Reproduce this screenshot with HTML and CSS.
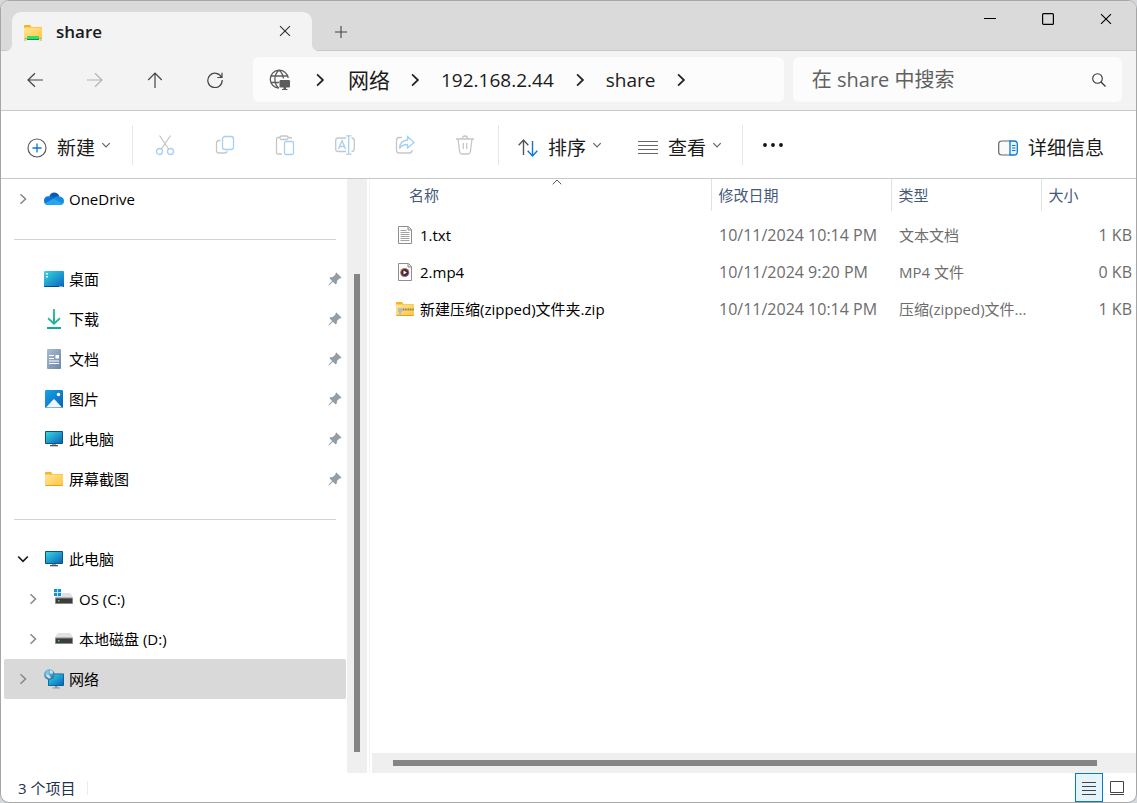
FILE: index.html
```html
<!DOCTYPE html>
<html lang="zh-CN">
<head>
<meta charset="utf-8">
<title>share</title>
<link rel="stylesheet" href="styles.css">
</head>
<body>
<svg class="sprite" aria-hidden="true">
  <defs>
    <linearGradient id="g-screen" x1="0" y1="0" x2="1" y2="1"><stop offset="0" stop-color="#35d8e0"/><stop offset="1" stop-color="#0a63bd"/></linearGradient>
    <linearGradient id="g-folder" x1="0" y1="0" x2="1" y2="1"><stop offset="0" stop-color="#ffe6a0"/><stop offset="1" stop-color="#ffc637"/></linearGradient>
    <linearGradient id="g-down" x1="0" y1="0" x2="0" y2="1"><stop offset="0" stop-color="#3cc78c"/><stop offset="1" stop-color="#0fa89c"/></linearGradient>
    <linearGradient id="g-doc" x1="0" y1="0" x2="1" y2="1"><stop offset="0" stop-color="#a9bdd2"/><stop offset="1" stop-color="#6c87a8"/></linearGradient>
    <linearGradient id="g-pic" x1="0" y1="0" x2="1" y2="1"><stop offset="0" stop-color="#18a4e8"/><stop offset="1" stop-color="#0860b8"/></linearGradient>
    <linearGradient id="g-play" x1="0" y1="0" x2="1" y2="1"><stop offset="0" stop-color="#f08030"/><stop offset="1" stop-color="#8040b0"/></linearGradient>
    <radialGradient id="g-globe" cx=".35" cy=".3" r=".8"><stop offset="0" stop-color="#8ccdea"/><stop offset="1" stop-color="#1b6f9c"/></radialGradient>
  </defs>
  <symbol id="i-right" viewBox="0 0 12 12"><path d="M3.500 1.200 8.500 6 3.500 10.800" fill="none" stroke="currentColor" stroke-width="1.500"/></symbol>
  <symbol id="i-down" viewBox="0 0 12 12"><path d="M1.200 3.500 6 8.300 10.800 3.500" fill="none" stroke="currentColor" stroke-width="1.700"/></symbol>
  <symbol id="i-drop" viewBox="0 0 8 8"><path d="M1 2.500 4 5.500 7 2.500" fill="none" stroke="#666" stroke-width="1"/></symbol>
  <symbol id="i-close" viewBox="0 0 14 14"><path d="M1.200 1.200 12.800 12.800M12.800 1.200 1.200 12.800" fill="none" stroke="currentColor" stroke-width="1.300"/></symbol>
  <symbol id="i-pin" viewBox="0 0 14 14"><path d="M8.400.6 13.400 5.500 12.500 6.400 11.400 6.500 9 9.100 8.700 11.600 7.700 12.400 4.900 9.700 1.200 13.300.5 12.800 4.100 9 1.500 6.300 2.200 5.300 4.800 5 7.400 2.600 7.500 1.400Z" fill="#929da5"/></symbol>
  <symbol id="i-pc" viewBox="0 0 20 20"><path d="M8 14h4v3H8z" fill="#9aa5ad"/><path d="M6 16h8v1.300H6z" fill="#4a5056"/><rect x="1" y="2" width="18" height="13" rx=".8" fill="#0c5480"/><rect x="2" y="3" width="16" height="11" fill="url(#g-screen)"/></symbol>
  <symbol id="i-folder" viewBox="0 0 20 20"><path d="M1 4q0-1 1-1h5l1.500 2H18q1 0 1 1v3H1z" fill="#f9b41b"/><rect x="1" y="5.500" width="18" height="11.500" rx=".8" fill="url(#g-folder)"/><path d="M1.500 16.500h17" stroke="#e2a31d"/></symbol>
  <symbol id="i-drive" viewBox="0 0 20 20"><path d="M4 4h12q1.600 1 3 5H1q1.400-4 3-5z" fill="#dfe1e4"/><rect x="1" y="8.500" width="18" height="6.500" rx=".7" fill="#8a8a8a"/><rect x="2" y="9.500" width="16" height="4.500" fill="#3c3c3c"/><rect x="4" y="11" width="1.500" height="1.500" fill="#34e24a"/></symbol>
  <symbol id="i-page" viewBox="0 0 20 20"><path d="M3.500 1.500h10l3 3v14h-13z" fill="#fdfdfd" stroke="#8e8e8e"/><path d="M13 1.500v3.500h3.500" fill="#ddd" stroke="#8e8e8e"/></symbol>
</svg>

<div class="window">
  <header class="titlebar">
    <div class="tab">
      <svg class="ic20" viewBox="0 0 20 20"><use href="#i-folder"/><rect x="4" y="14" width="12" height="4" rx="1" fill="#2be06a"/><path d="M4 17.500h12" stroke="#138c3f" stroke-width="1.200"/><path d="M1 18h2.500M16.500 18h2.500" stroke="#aaa"/></svg>
      <span class="tab-title">share</span>
      <button class="plain" aria-label="关闭标签页"><svg class="ic12"><use href="#i-close"/></svg></button>
    </div>
    <button class="plain new-tab" aria-label="新标签页"><svg class="ic12" viewBox="0 0 12 12"><path d="M6 0v12M0 6h12" stroke="#444" fill="none" stroke-width="1.100"/></svg></button>
    <div class="controls">
      <button class="plain" aria-label="最小化"><svg class="ic12" viewBox="0 0 12 12"><path d="M0 5.500h12" stroke="#000"/></svg></button>
      <button class="plain" aria-label="最大化"><svg class="ic12" viewBox="0 0 12 12"><rect x=".6" y=".6" width="10.800" height="10.800" rx="1" fill="none" stroke="#000" stroke-width="1.200"/></svg></button>
      <button class="plain" aria-label="关闭"><svg class="ic12"><use href="#i-close"/></svg></button>
    </div>
  </header>

  <div class="navbar">
    <div class="nav-buttons">
      <button class="plain" aria-label="后退"><svg class="ic16" viewBox="0 0 16 16"><path d="M16 8H1M8 1.200 1 8 8 14.800"/></svg></button>
      <button class="plain off" aria-label="前进" disabled><svg class="ic16" viewBox="0 0 16 16"><path d="M0 8h15M8 1.200 15 8 8 14.800"/></svg></button>
      <button class="plain" aria-label="向上"><svg class="ic16" viewBox="0 0 16 16"><path d="M8 16V1M1.200 8 8 1 14.800 8"/></svg></button>
      <button class="plain" aria-label="刷新"><svg class="ic16" viewBox="0 0 16 16"><path d="M14.600 5.500A7.200 7.200 0 1 0 15.200 8M15 .8v4.700h-4.700"/></svg></button>
    </div>
    <nav class="address" aria-label="地址">
      <svg class="globe" viewBox="0 0 22 22"><g fill="none" stroke="#5c5c5c" stroke-width="1.300"><path d="M10 19.200A9 9 0 1 1 19.200 9M2 7h16.500M2 13.500h8M10 19.200C4.500 15 4.500 5.500 10 1.200 13 3.500 14.200 6 14.400 9.500"/></g><rect x="10.500" y="11" width="10.500" height="7.500" rx="1.200" fill="#5c5c5c"/><path d="M14.500 18h2.500v2h1.500v1H13v-1h1.500z" fill="#5c5c5c"/></svg>
      <svg class="sep"><use href="#i-right"/></svg>
      <a class="crumb cjk" href="#">网络</a>
      <svg class="sep"><use href="#i-right"/></svg>
      <a class="crumb" href="#">192.168.2.44</a>
      <svg class="sep"><use href="#i-right"/></svg>
      <a class="crumb" href="#">share</a>
      <svg class="sep"><use href="#i-right"/></svg>
    </nav>
    <form class="search">
      <input type="text" aria-label="搜索" placeholder="在 share 中搜索">
      <button class="plain" type="button" aria-label="搜索"><svg class="ic14" viewBox="0 0 14 14"><circle cx="5.500" cy="5.500" r="4.800" fill="none" stroke="#333" stroke-width="1.100"/><path d="M9 9l4.500 4.500" stroke="#333" stroke-width="1.200"/></svg></button>
    </form>
  </div>

  <div class="toolbar" role="toolbar">
    <button class="cmd"><svg class="ic20" viewBox="0 0 20 20"><circle cx="10" cy="10" r="9" fill="none" stroke="#5b5b5b" stroke-width="1.200"/><path d="M10 5.500v9M5.500 10h9" stroke="#0a78d0" stroke-width="1.300"/></svg>新建<svg class="drop"><use href="#i-drop"/></svg></button>
    <div class="group">
      <button class="tool" disabled aria-label="剪切"><svg class="ic20" viewBox="0 0 20 20"><path class="g" d="M4.500 0.500 13.600 14M15.500 0.500 6.400 14"/><circle class="b" cx="4.500" cy="16.500" r="3"/><circle class="b" cx="15.500" cy="16.500" r="3"/></svg></button>
      <button class="tool" disabled aria-label="复制"><svg class="ic20" viewBox="0 0 20 20"><path class="g" d="M5.500 5.500H4Q1.500 5.500 1.500 8v7.500Q1.500 18 4 18h5.500q2.500 0 2.500-2"/><rect class="b" x="7.500" y="1.500" width="11" height="13" rx="2.500"/></svg></button>
      <button class="tool" disabled aria-label="粘贴"><svg class="ic20" viewBox="0 0 20 20"><path class="g" d="M5 2.500H3Q1.500 2.500 1.500 4v13.500Q1.500 19 3 19h4M13 2.500h2q1.500 0 1.500 1.500"/><rect class="g" x="5" y="1" width="8" height="3.500" rx="1.500"/><rect class="b" x="9.500" y="6.500" width="9" height="13" rx="1.500"/></svg></button>
      <button class="tool" disabled aria-label="重命名"><svg class="ic20" viewBox="0 0 20 20"><path class="g" d="M11 3H3Q.7 3 .7 5.500v8.500Q.7 16.500 3 16.500h8M16.500 3q2.800 0 2.800 2.500v8.500q0 2.500-2.800 2.500"/><path class="b" d="M3.500 14 7 5.500 10.500 14M4.700 11.500h4.600M13.700.8v18.400M11 .8h5.500M11 19.200h5.500"/></svg></button>
      <button class="tool" disabled aria-label="共享"><svg class="ic20" viewBox="0 0 20 20"><path class="g" d="M7 2.500H4Q1.500 2.500 1.500 5v10.500Q1.500 18 4 18h10.500q2.500 0 2.500-3"/><path class="b" d="M12.500 1.500 19 7.500 12.500 13v-3.500Q7 9.500 4.500 13.500 5 5.500 12.500 5z"/></svg></button>
      <button class="tool" disabled aria-label="删除"><svg class="ic20" viewBox="0 0 20 20"><path class="g" d="M1 4h18M7.500 3.700Q7.500 1 10 1t2.500 2.700M3 4l1.700 13Q5 19 7 19h6q2 0 2.300-2L17 4M8.300 8v6M11.700 8v6"/></svg></button>
    </div>
    <button class="cmd"><svg class="ic20" viewBox="0 0 20 20"><path d="M5.500 17V2M.7 7.200 5.500 2l4.800 5.200" fill="none" stroke="#555" stroke-width="1.400"/><path d="M14.500 3v15M9.700 12.800 14.500 18l4.800-5.200" fill="none" stroke="#0a78d0" stroke-width="1.400"/></svg>排序<svg class="drop"><use href="#i-drop"/></svg></button>
    <button class="cmd"><svg class="ic20" viewBox="0 0 20 20"><path d="M0 3.500h20M0 7.500h20M0 11.500h20M0 15.500h20" stroke="#666" stroke-width="1.200"/></svg>查看<svg class="drop"><use href="#i-drop"/></svg></button>
    <button class="more" aria-label="更多"><svg class="ic20" viewBox="0 0 20 20"><g fill="#111"><circle cx="2" cy="10" r="1.900"/><circle cx="10" cy="10" r="1.900"/><circle cx="18" cy="10" r="1.900"/></g></svg></button>
    <button class="cmd details"><svg class="ic20" viewBox="0 0 20 20"><path d="M12 3H4Q.7 3 .7 6v8q0 3 3.300 3h8" fill="#fafafa" stroke="#666" stroke-width="1.200"/><path d="M12 3h4q3.300 0 3.300 3v8q0 3-3.300 3h-4z" fill="#e8f4fd" stroke="#0a78d0" stroke-width="1.300"/><path d="M14 7.500h3.500M14 10h3.500M14 12.500h3.500" stroke="#0a78d0" stroke-width="1.100"/></svg>详细信息</button>
  </div>

  <main class="body">
    <aside class="sidebar">
      <ul class="tree">
        <li class="item"><svg class="chev"><use href="#i-right"/></svg><svg class="ic20" viewBox="0 0 20 20"><path d="M5.500 9Q5 4 10 3.500q4 0 5.500 4L11 12z" fill="#0a5bb0"/><path d="M4.500 16Q0 16 0 11.700 0 7.500 4.500 7.300q2.500-.3 4.500 1.200L16 13z" fill="#0d78d0"/><path d="M10 8.700Q12 6.500 15.500 7.500 20 8 20 12q0 4-4 4l-6-3z" fill="#168ee0"/><path d="M4.500 16Q2 16 .8 14.300L9.500 9.800 19 14.500Q18 16 16 16z" fill="#2aa4ee"/></svg><span>OneDrive</span></li>
        <li class="rule"></li>
        <li class="item"><span class="chev"></span><svg class="ic20" viewBox="0 0 20 20"><rect y="2" width="20" height="16" rx="1" fill="url(#g-screen)"/><path d="M0 17h20v.3q0 .7-.7.7H.7Q0 18 0 17.300z" fill="#084a86"/><path d="M2 4h2v1.500H2zM2 7h2v1.500H2zM15.500 17h1v1h-1zM17.500 17h1v1h-1z" fill="#fff"/></svg><span>桌面</span><svg class="pin"><use href="#i-pin"/></svg></li>
        <li class="item"><span class="chev"></span><svg class="ic20" viewBox="0 0 20 20"><path d="M9 0h2v12.500l4.300-4L16.500 10 10 16 3.500 10l1.200-1.500L9 12.500zM3 18h14v2H3z" fill="url(#g-down)"/></svg><span>下载</span><svg class="pin"><use href="#i-pin"/></svg></li>
        <li class="item"><span class="chev"></span><svg class="ic20" viewBox="0 0 20 20"><rect x="3" width="14" height="20" rx="1" fill="url(#g-doc)"/><path d="M5 6.500h5M5 9.500h5M5 12h10M5 14.500h10" stroke="#fff" stroke-width="1.200"/><rect x="11.500" y="6" width="3.500" height="3.500" fill="#fff"/></svg><span>文档</span><svg class="pin"><use href="#i-pin"/></svg></li>
        <li class="item"><span class="chev"></span><svg class="ic20" viewBox="0 0 20 20"><rect x="1" y="1" width="18" height="18" rx="1.200" fill="url(#g-pic)"/><circle cx="14.500" cy="5.500" r="1.700" fill="#fff"/><path d="M2 18.500 9.300 10.500q.7-.7 1.400 0L18 18.500z" fill="#eef6fd"/></svg><span>图片</span><svg class="pin"><use href="#i-pin"/></svg></li>
        <li class="item"><span class="chev"></span><svg class="ic20"><use href="#i-pc"/></svg><span>此电脑</span><svg class="pin"><use href="#i-pin"/></svg></li>
        <li class="item"><span class="chev"></span><svg class="ic20"><use href="#i-folder"/></svg><span>屏幕截图</span><svg class="pin"><use href="#i-pin"/></svg></li>
        <li class="rule"></li>
        <li class="item"><svg class="chev open"><use href="#i-down"/></svg><svg class="ic20"><use href="#i-pc"/></svg><span>此电脑</span></li>
        <li class="item child"><svg class="chev"><use href="#i-right"/></svg><svg class="ic20" viewBox="0 0 20 20"><use href="#i-drive"/><path d="M-1-2h9v9h-9z" fill="#fff"/><path d="M0 0h3.200v3.200H0zM3.900 0h3.200v3.200H3.900zM0 3.900h3.200v3.200H0zM3.900 3.900h3.200v3.200H3.900z" fill="#148fe0"/></svg><span>OS (C:)</span></li>
        <li class="item child"><svg class="chev"><use href="#i-right"/></svg><svg class="ic20"><use href="#i-drive"/></svg><span>本地磁盘 (D:)</span></li>
        <li class="item selected"><svg class="chev"><use href="#i-right"/></svg><svg class="ic20" viewBox="0 0 20 20"><path d="M11 16h2.500v3H11zM8.500 18.500H16v1H8.500z" fill="#8d989f"/><rect x="4" y="4.500" width="16" height="12.500" rx=".8" fill="#0c5d94"/><rect x="4.800" y="5.300" width="14.400" height="10.900" fill="url(#g-screen)"/><circle cx="5.300" cy="5.500" r="5.300" fill="url(#g-globe)"/><path d="M2 5l3 1 2 3-2 .5-2.500-2zM6 .8 9 2.500 8.500 5 6 4z" fill="#c9e6f3"/></svg><span>网络</span></li>
      </ul>
      <div class="vscroll"><div class="thumb"></div></div>
    </aside>

    <section class="files">
      <table>
        <colgroup><col><col class="c-date"><col class="c-type"><col class="c-size"></colgroup>
        <thead><tr><th>名称<svg class="sort" viewBox="0 0 10 6"><path d="M.7 5.300 5 1l4.300 4.300" fill="none" stroke="#555"/></svg></th><th>修改日期</th><th>类型</th><th>大小</th></tr></thead>
        <tbody>
          <tr><td><div class="file"><svg class="ic20" viewBox="0 0 20 20"><use href="#i-page"/><path d="M5.500 5.500h6M5.500 7.500h9M5.500 9.500h9M5.500 11.500h9M5.500 13.500h9M5.500 15.500h9" stroke="#999" stroke-width=".9"/></svg><span>1.txt</span></div></td><td class="date">10/11/2024 10:14 PM</td><td>文本文档</td><td>1 KB</td></tr>
          <tr><td><div class="file"><svg class="ic20" viewBox="0 0 20 20"><use href="#i-page"/><circle cx="9.700" cy="10.500" r="4.600" fill="url(#g-play)"/><circle cx="9.700" cy="10.500" r="3.500" fill="#3b3038"/><path d="M8.500 8.500v4l3.300-2z" fill="#fff"/></svg><span>2.mp4</span></div></td><td class="date">10/11/2024 9:20 PM</td><td>MP4 文件</td><td>0 KB</td></tr>
          <tr><td><div class="file"><svg class="ic20" viewBox="0 0 20 20"><use href="#i-folder"/><path d="M3 10.500h16" stroke="#77706a" stroke-width="2.200" stroke-dasharray="1 .7"/><path d="M3 9.500h4v3.500H6v3.500H4V13H3z" fill="#b9bcc0"/></svg><span>新建压缩(zipped)文件夹.zip</span></div></td><td class="date">10/11/2024 10:14 PM</td><td>压缩(zipped)文件...</td><td>1 KB</td></tr>
        </tbody>
      </table>
      <div class="hscroll"><div class="thumb"></div></div>
    </section>
  </main>

  <footer class="status">
    <span class="count">3 个项目</span>
    <div class="views">
      <button class="plain on" aria-label="详细信息视图"><svg class="ic14" viewBox="0 0 14 14"><path d="M0 1.500h14M0 5.500h14M0 9.500h14M0 13.500h14" stroke="#444" fill="none"/></svg></button>
      <button class="plain" aria-label="大缩略图视图"><svg class="ic14" viewBox="0 0 14 14"><path d="M.5.500h13v11H.5zM0 13.500h14" stroke="#444" fill="none"/></svg></button>
    </div>
  </footer>
</div>
</body>
</html>
```
FILE: styles.css
```css
* { box-sizing: border-box; }

body {
  margin: 0;
  background: #d4d7dc;
  font-family: "Open Sans", "Noto Sans CJK SC", sans-serif;
  font-size: 15px;
  line-height: 20px;
  color: #000;
}

svg { display: block; flex: none; }
.sprite { position: absolute; width: 0; height: 0; }
.ic12 { width: 12px; height: 12px; }
.ic14 { width: 14px; height: 14px; }
.ic16 { width: 16px; height: 16px; }
.ic20 { width: 20px; height: 20px; overflow: visible; }

button {
  border: 0;
  padding: 0;
  background: none;
  font: inherit;
  color: inherit;
}
.plain { display: flex; align-items: center; justify-content: center; }

.window {
  display: flex;
  flex-direction: column;
  height: 100vh;
  overflow: hidden;
  border: 1px solid #a6a6a6;
  border-radius: 9px;
  background: #fff;
}

/* Title bar */
.titlebar {
  display: flex;
  height: 50px;
  flex: none;
  padding-left: 11px;
  background: #dadada;
  box-shadow: inset 0 -1px #c8c8c8;
}
.tab {
  position: relative;
  display: flex;
  align-items: center;
  width: 300px;
  margin-top: 11px;
  padding: 0 21px 0 11px;
  border-radius: 9px 9px 0 0;
  background: #f3f3f3;
}
.tab::before,
.tab::after {
  content: "";
  position: absolute;
  bottom: 0;
  width: 5px;
  height: 5px;
}
.tab::before { right: 100%; background: radial-gradient(circle at 0 0, transparent 4px, #f3f3f3 5px); }
.tab::after { left: 100%; background: radial-gradient(circle at 100% 0, transparent 4px, #f3f3f3 5px); }
.tab-title { flex: 1; margin-left: 13px; font-size: 17px; font-weight: 600; color: #1a1a1a; }
.tab .plain { height: 38px; align-self: start; color: #333; }
.new-tab { width: 58px; padding-top: 12px; }
.controls { display: flex; margin-left: auto; padding-right: 1px; }
.controls .plain { width: 58px; height: 36px; }

/* Address row */
.navbar {
  display: flex;
  flex: none;
  align-items: center;
  height: 60px;
  padding: 0 14px 2px 4px;
  border-bottom: 1px solid #c8c8c8;
  background: #f3f3f3;
}
.nav-buttons { display: flex; width: 248px; color: #444; }
.nav-buttons .plain { width: 60px; height: 40px; }
.nav-buttons path { fill: none; stroke: currentColor; stroke-width: 1.2; }
.nav-buttons .off { color: #b4b4b4; }
.address {
  display: flex;
  flex: 7 1 0;
  align-items: center;
  height: 45px;
  padding-left: 16px;
  border-radius: 6px;
  background: #fcfcfc;
}
.globe { width: 22px; height: 22px; margin-right: 16px; }
.sep { width: 14px; height: 14px; margin: 0 6px; color: #222; }
.crumb { margin: 0 13px; font-size: 19px; line-height: 28px; color: #1b1b1b; text-decoration: none; }
.crumb.cjk { margin: 0 12px 0 15px; font-size: 21px; }
.search {
  display: flex;
  flex: 4 1 0;
  align-items: center;
  height: 45px;
  margin-left: 9px;
  padding: 0 16px 0 19px;
  border-radius: 6px;
  background: #fcfcfc;
}
.search input {
  flex: 1;
  min-width: 0;
  height: 40px;
  border: 0;
  padding: 0;
  outline: 0;
  background: none;
  font: inherit;
  font-size: 20px;
}
.search input::placeholder { color: #606060; opacity: 1; }

/* Command bar */
.toolbar {
  display: flex;
  flex: none;
  align-items: center;
  height: 68px;
  padding: 0 32px 0 16px;
  border-bottom: 1px solid #c8c8c8;
  font-size: 19px;
  color: #1a1a1a;
}
.cmd { display: flex; align-items: center; gap: 10px; height: 40px; padding: 6px 10px 0; }
.cmd .drop { width: 10px; height: 10px; margin: -6px 0 0 -4px; }
.group {
  display: flex;
  margin: 0 9px 0 11px;
  padding: 0 3px 0 2px;
  border: solid #e6e6e6;
  border-width: 0 1px;
}
.tool { display: flex; align-items: center; justify-content: center; width: 60px; height: 40px; }
.tool .g,
.tool .b { fill: none; stroke: #c6c6c6; stroke-width: 1.3; }
.tool .b { stroke: #a5d0f2; }
.cmd + .cmd { margin-left: 16px; }
.more {
  display: flex;
  align-items: center;
  height: 40px;
  margin-left: 10px;
  padding-left: 20px;
  border-left: 1px solid #e6e6e6;
}
.toolbar .details { margin-left: auto; padding-right: 0; }

/* Main area */
.body { display: flex; flex: 1; min-height: 0; }
.sidebar {
  display: flex;
  flex: none;
  width: 369px;
  padding-right: 2px;
  border-right: 1px solid #f3f3f3;
}
.tree { flex: 1; margin: 0; padding: 0 1px 0 3px; list-style: none; overflow: hidden; }
.item { display: flex; align-items: center; height: 40px; padding: 0 4px 0 10px; border-radius: 2px; }
.item .ic20 { margin: 0 5px 0 12px; }
.item.child { padding-left: 20px; }
.item.selected { background: #d9d9d9; }
.chev { width: 18px; height: 12px; color: #858585; }
.chev.open { color: #1a1a1a; }
.pin { width: 14px; height: 14px; margin-left: auto; }
.rule { height: 40px; padding: 20px 10px 0; }
.rule::before { content: ""; display: block; height: 1px; background: #d2d2d2; }
.vscroll { display: flex; flex-direction: column; align-items: center; width: 20px; padding: 95px 0 21px; background: #efefef; }
.vscroll .thumb { flex: 1; width: 6px; background: #858585; }

.files { display: flex; flex: 1; flex-direction: column; min-width: 0; padding-left: 2px; }
table { width: 100%; table-layout: fixed; border-collapse: collapse; }
.c-date { width: 180px; }
.c-type { width: 150px; }
.c-size { width: 95px; }
th {
  position: relative;
  height: 32px;
  padding: 0 7px;
  border-left: 1px solid #e2e2e2;
  font-weight: 400;
  text-align: left;
  color: #46597a;
}
th:first-child { padding-left: 37px; border-left: 0; }
.sort { position: absolute; top: 0; left: 180px; width: 10px; height: 6px; }
tbody::before { content: ""; display: block; height: 5px; }
td { height: 37px; padding: 0 8px; color: #6d6d6d; white-space: nowrap; overflow: hidden; text-overflow: ellipsis; }
td:first-child { padding-left: 23px; color: #000; }
td:last-child { padding-right: 4px; text-align: right; }
td.date,
td:last-child { font-size: 16px; }
.file { display: flex; align-items: center; gap: 5px; }
.hscroll { height: 20px; margin-top: auto; padding: 7px 39px 7px 21px; background: #efefef; }
.hscroll .thumb { height: 6px; background: #858585; }

/* Status bar */
.status { display: flex; flex: none; align-items: center; height: 29px; padding: 0 5px 0 17px; color: #1e3250; }
.count { padding-right: 12px; border-right: 1px solid #ececec; line-height: 14px; }
.views { display: flex; margin-left: auto; }
.views .plain { width: 28px; height: 29px; }
.views .on { border: 1px solid #0a78c8; background: #e5f3fb; }
```
